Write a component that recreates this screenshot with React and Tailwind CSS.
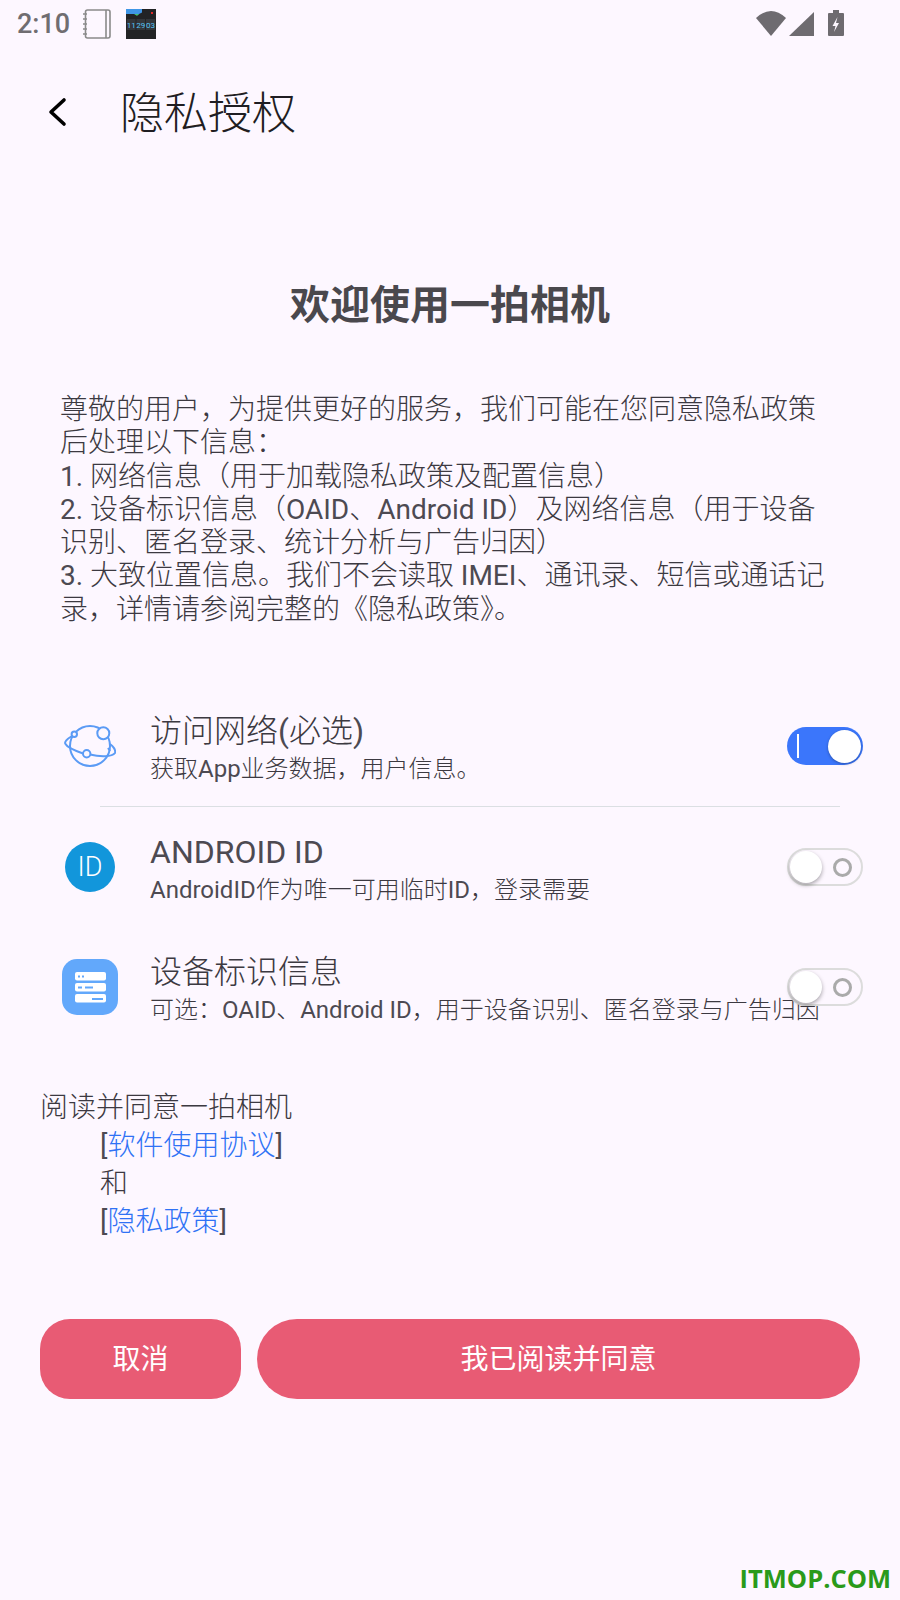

const cjk = { fontFamily: 'Roboto, "Noto Sans CJK SC", sans-serif' };

function L({ children }) {
  return <span className="font-normal text-[#4d4a52]">{children}</span>;
}

function Toggle({ on }) {
  if (on) {
    return (
      <div className="relative flex h-[38px] w-[76px] shrink-0 items-center justify-between rounded-full bg-[#3b76fb] pl-[10px] pr-[2px]">
        <div className="h-[24px] w-[2px] bg-white" />
        <div className="h-[33px] w-[33px] rounded-full bg-white shadow-[0_1px_3px_rgba(0,0,0,0.3)]" />
      </div>
    );
  }
  return (
    <div className="relative flex h-[38px] w-[76px] shrink-0 items-center justify-between rounded-full border-2 border-[#dcdcdc] bg-[#fdf7ff] pl-[1px] pr-[9px]">
      <div className="h-[32px] w-[32px] rounded-full bg-white shadow-[0_2px_4px_rgba(0,0,0,0.35)]" />
      <div className="h-[19px] w-[19px] rounded-full border-[3px] border-[#aaaaaa]" />
    </div>
  );
}

function Row({ icon, title, sub, on }) {
  return (
    <div className="flex h-[80px] items-center">
      <div className="flex w-[60px] shrink-0 items-center justify-center">{icon}</div>
      <div className="ml-[30px] min-w-0 flex-1 pt-[4px]">
        <div className="whitespace-nowrap text-[32px] leading-[40px] text-[#3c3941]">{title}</div>
        <div className="mt-[2px] whitespace-nowrap text-[24px] leading-[32px] text-[#3c3941]">{sub}</div>
      </div>
      <Toggle on={on} />
    </div>
  );
}

const GlobeIcon = (
  <svg width="52" height="44" viewBox="0 0 52 44" fill="none" stroke="#5b9bf5" strokeWidth="2">
    <circle cx="26" cy="22" r="20" />
    <path d="M8 12 C3 15 0 18 1.500 20 C3 23 12 27 19 29.500" />
    <path d="M26 30.500 C36 33 48 33 51 29 C52 26 49 22 46 20" />
    <path d="M44 24 L46 27" />
    <circle cx="39.300" cy="9.300" r="6" fill="#fdf7ff" />
    <circle cx="22.700" cy="29.700" r="3.700" fill="#fdf7ff" />
    <circle cx="10.300" cy="10.300" r="2.700" fill="#fdf7ff" />
  </svg>
);

const IdIcon = (
  <div className="flex h-[50px] w-[50px] items-center justify-center rounded-full bg-[#1296db] text-[27px] font-light text-white">ID</div>
);

const ServerIcon = (
  <svg width="56" height="56" viewBox="0 0 56 56">
    <rect width="56" height="56" rx="15" fill="#62a8fb" />
    <rect x="13" y="13" width="31" height="8.500" rx="2" fill="#fff" />
    <rect x="13" y="24" width="31" height="8.500" rx="2" fill="#fff" />
    <rect x="13" y="35" width="31" height="8.500" rx="2" fill="#fff" />
    <rect x="16" y="16.500" width="2" height="2" fill="#62a8fb" />
    <rect x="20" y="16.500" width="2" height="2" fill="#62a8fb" />
    <rect x="16" y="27.500" width="4" height="2" fill="#62a8fb" />
    <rect x="23" y="27.500" width="8" height="2" fill="#62a8fb" />
    <rect x="30" y="39" width="11" height="2" fill="#62a8fb" />
  </svg>
);

const NotebookIcon = (
  <svg width="28" height="30" viewBox="0 0 28 30" fill="none" stroke="#8a8a8a" strokeWidth="1.600">
    <rect x="2.500" y="1" width="24.500" height="28" rx="2" />
    <path d="M23 1v28" />
    <path d="M0 5h4M0 10h4M0 15h4M0 20h4M0 25h4" />
  </svg>
);

const ClockThumb = (
  <svg width="30" height="30" viewBox="0 0 30 30">
    <rect width="30" height="30" fill="#222325" />
    <path d="M0 0h16v3.500l-3 1.500-2 1.500-2-1.500H0z" fill="#3f96e6" />
    <path d="M8 5h5l-2 1.800z" fill="#45c46a" />
    <rect x="25" y="3" width="2" height="2" fill="#e02a2a" />
    <rect x="1" y="10" width="8.500" height="11" fill="#33363a" />
    <rect x="10.500" y="10" width="8.500" height="11" fill="#33363a" />
    <rect x="20" y="10" width="9" height="11" fill="#33363a" />
    <text x="5.200" y="18.500" fontSize="8" fill="#55c3f5" textAnchor="middle">11</text>
    <text x="14.700" y="18.500" fontSize="8" fill="#55c3f5" textAnchor="middle">29</text>
    <text x="24.500" y="18.500" fontSize="8" fill="#55c3f5" textAnchor="middle">03</text>
  </svg>
);

const StatusRight = (
  <svg width="90" height="28" viewBox="0 0 90 28" fill="#6e6b70">
    <path d="M1 8 Q16 -6 31 8 L16 26 Z" />
    <path d="M34 26 L59 2 V26 Z" />
    <path d="M74 3h4V0h6v3h4a1 1 0 0 1 1 1v21a1 1 0 0 1-1 1H74a1 1 0 0 1-1-1V4a1 1 0 0 1 1-1z" />
    <path d="M82.500 7l-5 9h3l-1.500 6 5-9h-3z" fill="#fdf7ff" />
  </svg>
);

export default function App() {
  return (
    <div className="relative flex h-[1600px] w-[900px] flex-col overflow-hidden bg-[#fdf7ff]" style={cjk}>
      {/* status bar */}
      <div className="flex h-[48px] shrink-0 items-center pl-[17px] pr-[55px]">
        <span className="text-[27px] font-medium leading-none text-[#706d71]">2:10</span>
        <div className="ml-[13px]">{NotebookIcon}</div>
        <div className="ml-[15px]">{ClockThumb}</div>
        <div className="ml-auto">{StatusRight}</div>
      </div>

      {/* header */}
      <div className="flex h-[128px] shrink-0 items-center pl-[48px]">
        <svg width="20" height="30" viewBox="0 0 20 30" fill="none" stroke="#000" strokeWidth="3.600" strokeLinecap="round" strokeLinejoin="round">
          <path d="M16 3 L3 15 L16 27" />
        </svg>
        <h1 className="ml-[52px] pt-[4px] text-[44px] font-light leading-none text-[#1f1d22]">隐私授权</h1>
      </div>

      <div className="mt-[103px] text-center text-[40px] font-bold leading-[54px] text-[#4a484d]">欢迎使用一拍相机</div>

      <div className="mt-[60px] px-[60px] text-[28px] font-light leading-[33.3px] text-[#3c3941]">
        <div>尊敬的用户，为提供更好的服务，我们可能在您同意隐私政策</div>
        <div>后处理以下信息：</div>
        <div><L>1.</L> 网络信息（用于加载隐私政策及配置信息）</div>
        <div><L>2.</L> 设备标识信息（<L>OAID</L>、<L>Android ID</L>）及网络信息（用于设备</div>
        <div>识别、匿名登录、统计分析与广告归因）</div>
        <div><L>3.</L> 大致位置信息。我们不会读取 <L>IMEI</L>、通讯录、短信或通话记</div>
        <div>录，详情请参阅完整的《隐私政策》。</div>
      </div>

      {/* permission rows */}
      <div className="mt-[80px] pl-[60px] pr-[37px] font-light">
        <Row icon={GlobeIcon} title={<>访问网络<L>(</L>必选<L>)</L></>} sub={<>获取<L>App</L>业务数据，用户信息。</>} on />
        <div className="my-[20px] ml-[40px] mr-[23px] h-px bg-[#dbdfe3]" />
        <Row icon={IdIcon} title={<L>ANDROID ID</L>} sub={<><L>AndroidID</L>作为唯一可用临时<L>ID</L>，登录需要</>} />
        <div className="h-[40px]" />
        <Row icon={ServerIcon} title="设备标识信息" sub={<>可选：<L>OAID</L>、<L>Android ID</L>，用于设备识别、匿名登录与广告归因</>} />
      </div>

      {/* agreement */}
      <div className="mt-[62px] pl-[40px] text-[28px] font-light leading-[38px] text-[#3c3941]">
        <div>阅读并同意一拍相机</div>
        <div className="pl-[60px]"><L>[</L><span className="text-[#2f72f5]">软件使用协议</span><L>]</L></div>
        <div className="pl-[60px]">和</div>
        <div className="pl-[60px]"><L>[</L><span className="text-[#2f72f5]">隐私政策</span><L>]</L></div>
      </div>

      {/* buttons */}
      <div className="mt-[78px] flex gap-[16px] px-[40px]">
        <button className="flex h-[80px] w-[201px] items-center justify-center rounded-[30px] bg-[#e85b74] pt-[2px] text-[28px] text-white">取消</button>
        <button className="flex h-[80px] flex-1 items-center justify-center rounded-[40px] bg-[#e85b74] pt-[2px] text-[28px] text-white">我已阅读并同意</button>
      </div>

      <div className="absolute bottom-[5px] right-[9px] text-[25.5px] font-bold leading-[34px] text-[#2a9a1a]" style={{ fontFamily: '"Open Sans", sans-serif' }}>ITMOP.COM</div>
    </div>
  );
}
